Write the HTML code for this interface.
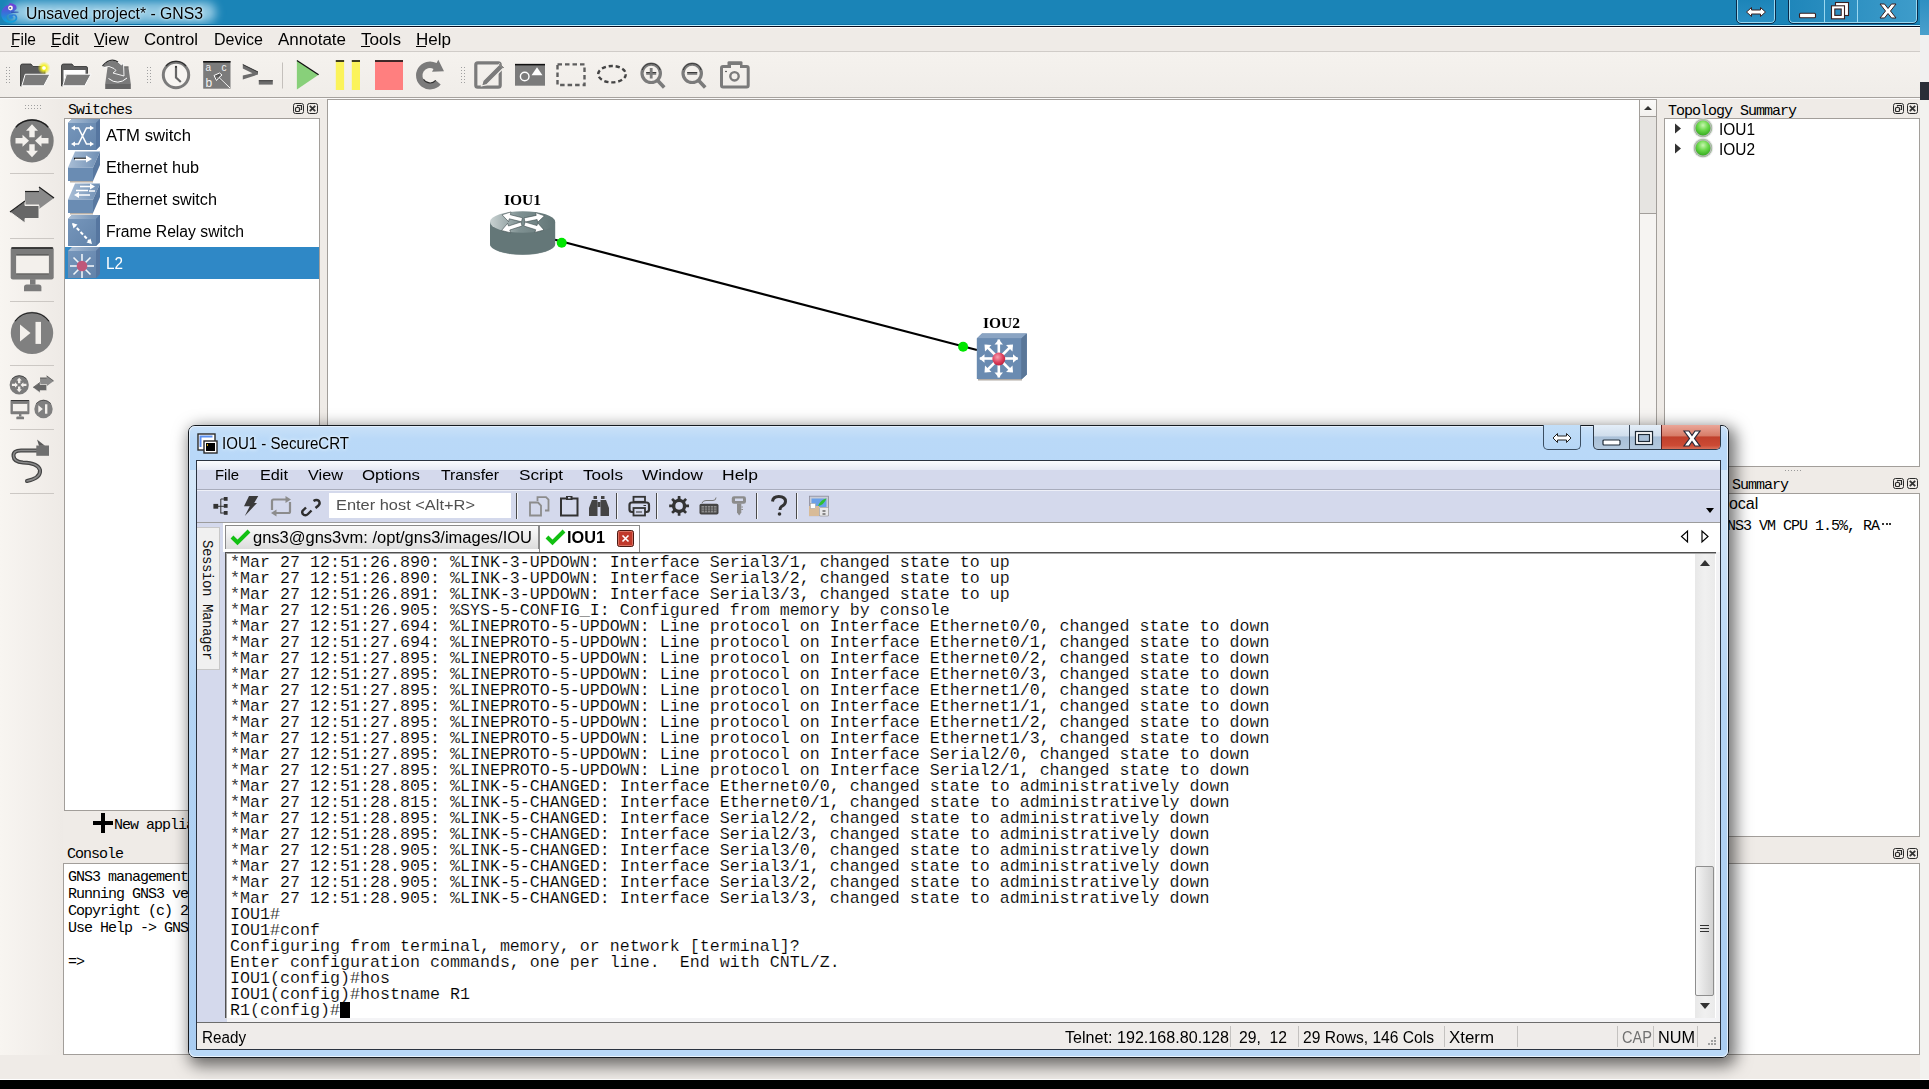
<!DOCTYPE html>
<html><head><meta charset="utf-8">
<style>
*{margin:0;padding:0;box-sizing:border-box}
html,body{width:1929px;height:1089px;overflow:hidden;background:#efebe7;font-family:"Liberation Sans",sans-serif;position:relative}
.a{position:absolute}
.t{position:absolute;white-space:pre;line-height:1}
svg{position:absolute;overflow:visible}
</style></head><body>
<div class="a" style="left:1920px;top:0px;width:9px;height:35px;background:linear-gradient(#2f8fc2,#4aa0cc);"></div><div class="a" style="left:1920px;top:35px;width:9px;height:47px;background:#f0f0f0;"></div><div class="a" style="left:1920px;top:82px;width:9px;height:18px;background:#2a2e38;"></div><div class="a" style="left:1920px;top:100px;width:9px;height:980px;background:#f2f2ef;"></div><div class="a" style="left:0px;top:0px;width:1920px;height:26px;background:#1a84b7;"></div><div class="a" style="left:10px;top:2px;width:206px;height:21px;border-radius:10px;background:rgba(225,245,255,.62);filter:blur(5px)"></div><div class="a" style="left:0px;top:24px;width:1920px;height:1px;background:#0c72a8;"></div><div class="a" style="left:0px;top:25px;width:1920px;height:1px;background:#c4f0ff;"></div><div class="a" style="left:0px;top:26px;width:1920px;height:1px;background:#070a1c;"></div><div class="a" style="left:0px;top:27px;width:1920px;height:1px;background:#ffffff;"></div><div class="a" style="left:1736px;top:-2px;width:40px;height:26px;border:1px solid #0a2a48;border-radius:0 0 5px 5px;box-shadow:inset 0 0 0 1px #9ad8f0;background:linear-gradient(#1c84b8,#2a90c4)"></div><div class="a" style="left:1788px;top:-2px;width:130px;height:26px;border:1px solid #0a2a48;border-radius:0 0 5px 5px;box-shadow:inset 0 0 0 1px #9ad8f0;background:linear-gradient(90deg,#1f86ba,#3e9cca)"></div><div class="a" style="left:1824px;top:0px;width:1px;height:23px;background:#9ad8f0;"></div><div class="a" style="left:1857px;top:0px;width:1px;height:23px;background:#9ad8f0;"></div><svg style="left:1745px;top:6px" width="22" height="12" viewBox="0 0 22 12"><path d="M1.5 6 L6.5 1.5 V4 H15.5 V1.5 L20.5 6 L15.5 10.5 V8 H6.5 V10.5 Z" fill="#fff" stroke="#3a2020" stroke-width="1"/></svg><svg style="left:1798px;top:12px" width="19" height="8"><rect x="1.5" y="1.2" width="16" height="4.6" rx="1" fill="#fff" stroke="#3a2020" stroke-width="1.1"/></svg><svg style="left:1830px;top:1px" width="21" height="19"><rect x="5.5" y="1.5" width="13" height="13" fill="#fff" stroke="#3a2020" stroke-width="1.1"/><rect x="1.5" y="4.8" width="13" height="13" fill="#fff" stroke="#3a2020" stroke-width="1.1"/><rect x="4.8" y="8" width="6.4" height="6.4" fill="#2a8cc0" stroke="#3a2020" stroke-width="1.1"/></svg><svg style="left:1879px;top:3px" width="18" height="16" viewBox="0 0 18 16"><path d="M1 1 H5.5 L9 5.5 L12.5 1 H17 L11.5 8 L17 15 H12.5 L9 10.5 L5.5 15 H1 L6.5 8 Z" fill="#fff" stroke="#3a2020" stroke-width="1"/></svg><div class="t" style="left:26px;top:6.00px;font-family:'Liberation Sans';font-size:16px;color:#000;transform:scaleX(0.9853);transform-origin:0 0;text-shadow:0 0 5px #d8f2ff,0 0 2px #e0f6ff;">Unsaved project* - GNS3</div><div class="a" style="left:0px;top:28px;width:1920px;height:23px;background:#efebe7;"></div><div class="a" style="left:0px;top:51px;width:1920px;height:1px;background:#d0ccc8;"></div><div class="t" style="left:11px;top:32.00px;font-family:'Liberation Sans';font-size:16px;color:#000;transform:scaleX(0.9697);transform-origin:0 0;">File</div><div class="t" style="left:51px;top:32.00px;font-family:'Liberation Sans';font-size:16px;color:#000;transform:scaleX(1.0153);transform-origin:0 0;">Edit</div><div class="t" style="left:94px;top:32.00px;font-family:'Liberation Sans';font-size:16px;color:#000;transform:scaleX(1.0177);transform-origin:0 0;">View</div><div class="t" style="left:144px;top:32.00px;font-family:'Liberation Sans';font-size:16px;color:#000;transform:scaleX(1.0470);transform-origin:0 0;">Control</div><div class="t" style="left:214px;top:32.00px;font-family:'Liberation Sans';font-size:16px;color:#000;transform:scaleX(1.0019);transform-origin:0 0;">Device</div><div class="t" style="left:278px;top:32.00px;font-family:'Liberation Sans';font-size:16px;color:#000;transform:scaleX(1.0615);transform-origin:0 0;">Annotate</div><div class="t" style="left:361px;top:32.00px;font-family:'Liberation Sans';font-size:16px;color:#000;transform:scaleX(1.0707);transform-origin:0 0;">Tools</div><div class="t" style="left:416px;top:32.00px;font-family:'Liberation Sans';font-size:16px;color:#000;transform:scaleX(1.0636);transform-origin:0 0;">Help</div><div class="a" style="left:11px;top:46px;width:8px;height:1px;background:#000;"></div><div class="a" style="left:51px;top:46px;width:8px;height:1px;background:#000;"></div><div class="a" style="left:94px;top:46px;width:10px;height:1px;background:#000;"></div><div class="a" style="left:361px;top:46px;width:9px;height:1px;background:#000;"></div><div class="a" style="left:416px;top:46px;width:10px;height:1px;background:#000;"></div><div class="a" style="left:0px;top:52px;width:1920px;height:45px;background:linear-gradient(#f5f2ee,#f0ede9);"></div><div class="a" style="left:0px;top:97px;width:1920px;height:1px;background:#a6a29e;"></div><div class="a" style="left:0px;top:98px;width:1920px;height:1px;background:#fbfaf9;"></div><div class="a" style="left:0px;top:99px;width:63px;height:956px;background:linear-gradient(90deg,#f8f5f1,#eeeae6);"></div><div class="a" style="left:0px;top:1055px;width:1920px;height:24px;background:#efebe7;"></div><div class="a" style="left:0px;top:1079px;width:1929px;height:1px;background:#ffffff;"></div><div class="a" style="left:0px;top:1080px;width:1929px;height:9px;background:#000;"></div><div class="a" style="left:63px;top:99px;width:264px;height:738px;background:#efebe7;"></div><div class="t" style="left:68px;top:103.00px;font-family:'Liberation Mono';font-size:15px;color:#000;letter-spacing:-1px;">Switches</div><svg style="left:293px;top:103px" width="26" height="12" viewBox="0 0 26 12"><rect x="0.5" y="0.5" width="10" height="10" rx="2" fill="none" stroke="#2a2a2a" stroke-width="1"/><rect x="2.5" y="4.5" width="4" height="4" rx="1" fill="none" stroke="#2a2a2a" stroke-width="1.2"/><path d="M4.5 3.5 V2.5 H8.5 V6.5 H7.5" fill="none" stroke="#2a2a2a" stroke-width="1.2"/><rect x="14.5" y="0.5" width="10" height="10" rx="2" fill="none" stroke="#2a2a2a" stroke-width="1"/><path d="M16.8 2.8 L22.2 8.2 M22.2 2.8 L16.8 8.2" stroke="#333" stroke-width="1.8"/></svg><div class="a" style="left:64px;top:118px;width:256px;height:693px;background:#a29e9a;"></div><div class="a" style="left:65px;top:119px;width:254px;height:691px;background:#ffffff;"></div><div class="a" style="left:65px;top:247px;width:254px;height:32px;background:#2f88c6;"></div><div class="t" style="left:106px;top:128.00px;font-family:'Liberation Sans';font-size:16px;color:#000;transform:scaleX(1.0431);transform-origin:0 0;">ATM switch</div><div class="t" style="left:106px;top:160.00px;font-family:'Liberation Sans';font-size:16px;color:#000;transform:scaleX(1.0150);transform-origin:0 0;">Ethernet hub</div><div class="t" style="left:106px;top:192.00px;font-family:'Liberation Sans';font-size:16px;color:#000;transform:scaleX(1.0147);transform-origin:0 0;">Ethernet switch</div><div class="t" style="left:106px;top:224.00px;font-family:'Liberation Sans';font-size:16px;color:#000;transform:scaleX(0.9823);transform-origin:0 0;">Frame Relay switch</div><div class="t" style="left:106px;top:256.00px;font-family:'Liberation Sans';font-size:16px;color:#fff;transform:scaleX(0.9552);transform-origin:0 0;">L2</div><svg style="left:93px;top:813px" width="20" height="20" viewBox="0 0 20 20"><path d="M8 0h4v8h8v4h-8v8h-4v-8h-8v-4h8z" fill="#000"/></svg><div class="t" style="left:114px;top:818.00px;font-family:'Liberation Mono';font-size:15px;color:#000;letter-spacing:-1px;">New appliance template</div><div class="a" style="left:327px;top:99px;width:1330px;height:738px;background:#a29e9a;"></div><div class="a" style="left:328px;top:100px;width:1311px;height:736px;background:#ffffff;"></div><div class="a" style="left:1639px;top:100px;width:17px;height:736px;background:#f6f4f2;"></div><div class="a" style="left:1639px;top:100px;width:1px;height:736px;background:#a29e9a;"></div><div class="a" style="left:1640px;top:100px;width:16px;height:16px;background:linear-gradient(#fbfaf9,#f3f1ee);"></div><div class="a" style="left:1640px;top:116px;width:16px;height:1px;background:#a29e9a;"></div><div class="a" style="left:1640px;top:117px;width:16px;height:96px;background:#e6e4e1;"></div><div class="a" style="left:1640px;top:213px;width:16px;height:1px;background:#a29e9a;"></div><svg style="left:1643px;top:104px" width="10" height="8"><path d="M1 6 L5 2 L9 6z" fill="#333"/></svg><div class="a" style="left:1657px;top:99px;width:263px;height:738px;background:#efebe7;"></div><div class="t" style="left:1668px;top:104.00px;font-family:'Liberation Mono';font-size:15px;color:#000;letter-spacing:-1px;">Topology Summary</div><svg style="left:1893px;top:103px" width="26" height="12" viewBox="0 0 26 12"><rect x="0.5" y="0.5" width="10" height="10" rx="2" fill="none" stroke="#2a2a2a" stroke-width="1"/><rect x="2.5" y="4.5" width="4" height="4" rx="1" fill="none" stroke="#2a2a2a" stroke-width="1.2"/><path d="M4.5 3.5 V2.5 H8.5 V6.5 H7.5" fill="none" stroke="#2a2a2a" stroke-width="1.2"/><rect x="14.5" y="0.5" width="10" height="10" rx="2" fill="none" stroke="#2a2a2a" stroke-width="1"/><path d="M16.8 2.8 L22.2 8.2 M22.2 2.8 L16.8 8.2" stroke="#333" stroke-width="1.8"/></svg><div class="a" style="left:1664px;top:118px;width:256px;height:349px;background:#a29e9a;"></div><div class="a" style="left:1665px;top:119px;width:254px;height:347px;background:#ffffff;"></div><svg style="left:1674px;top:123px" width="8" height="11"><path d="M1 0.5 L7 5.5 L1 10.5z" fill="#333"/></svg><div class="a" style="left:1694px;top:119px;width:18px;height:18px;border-radius:50%;background:radial-gradient(circle at 50% 35%,#c8f5b0 0,#6ad84a 35%,#2ca418 75%);box-shadow:0 0 0 1.5px #b8b8b8 inset, 0 0 1px 1px #d8d8d8"></div><div class="t" style="left:1719px;top:122.00px;font-family:'Liberation Sans';font-size:16px;color:#000;transform:scaleX(0.9640);transform-origin:0 0;">IOU1</div><svg style="left:1674px;top:143px" width="8" height="11"><path d="M1 0.5 L7 5.5 L1 10.5z" fill="#333"/></svg><div class="a" style="left:1694px;top:139px;width:18px;height:18px;border-radius:50%;background:radial-gradient(circle at 50% 35%,#c8f5b0 0,#6ad84a 35%,#2ca418 75%);box-shadow:0 0 0 1.5px #b8b8b8 inset, 0 0 1px 1px #d8d8d8"></div><div class="t" style="left:1719px;top:142.00px;font-family:'Liberation Sans';font-size:16px;color:#000;transform:scaleX(0.9640);transform-origin:0 0;">IOU2</div><div class="a" style="left:1785px;top:470px;width:1px;height:1px;background:#9a9a9a;"></div><div class="a" style="left:1788px;top:470px;width:1px;height:1px;background:#9a9a9a;"></div><div class="a" style="left:1791px;top:470px;width:1px;height:1px;background:#9a9a9a;"></div><div class="a" style="left:1794px;top:470px;width:1px;height:1px;background:#9a9a9a;"></div><div class="a" style="left:1797px;top:470px;width:1px;height:1px;background:#9a9a9a;"></div><div class="a" style="left:1800px;top:470px;width:1px;height:1px;background:#9a9a9a;"></div><div class="t" style="left:1668px;top:478.00px;font-family:'Liberation Mono';font-size:15px;color:#000;letter-spacing:-1px;">Compute Summary</div><svg style="left:1893px;top:478px" width="26" height="12" viewBox="0 0 26 12"><rect x="0.5" y="0.5" width="10" height="10" rx="2" fill="none" stroke="#2a2a2a" stroke-width="1"/><rect x="2.5" y="4.5" width="4" height="4" rx="1" fill="none" stroke="#2a2a2a" stroke-width="1.2"/><path d="M4.5 3.5 V2.5 H8.5 V6.5 H7.5" fill="none" stroke="#2a2a2a" stroke-width="1.2"/><rect x="14.5" y="0.5" width="10" height="10" rx="2" fill="none" stroke="#2a2a2a" stroke-width="1"/><path d="M16.8 2.8 L22.2 8.2 M22.2 2.8 L16.8 8.2" stroke="#333" stroke-width="1.8"/></svg><div class="a" style="left:1664px;top:493px;width:256px;height:344px;background:#a29e9a;"></div><div class="a" style="left:1665px;top:494px;width:254px;height:342px;background:#ffffff;"></div><div class="t" style="left:1720px;top:496.00px;font-family:'Liberation Sans';font-size:16px;color:#000;">Local</div><div class="t" style="left:1719px;top:519.00px;font-family:'Liberation Mono';font-size:15px;color:#000;letter-spacing:-1px;">GNS3 VM CPU 1.5%, RA</div><div class="a" style="left:1882px;top:523px;width:2px;height:2px;background:#333;"></div><div class="a" style="left:1885.5px;top:523px;width:2px;height:2px;background:#333;"></div><div class="a" style="left:1889px;top:523px;width:2px;height:2px;background:#333;"></div><div class="a" style="left:63px;top:837px;width:1857px;height:26px;background:#efebe7;"></div><div class="t" style="left:67px;top:847.00px;font-family:'Liberation Mono';font-size:15px;color:#000;letter-spacing:-1px;">Console</div><svg style="left:1893px;top:848px" width="26" height="12" viewBox="0 0 26 12"><rect x="0.5" y="0.5" width="10" height="10" rx="2" fill="none" stroke="#2a2a2a" stroke-width="1"/><rect x="2.5" y="4.5" width="4" height="4" rx="1" fill="none" stroke="#2a2a2a" stroke-width="1.2"/><path d="M4.5 3.5 V2.5 H8.5 V6.5 H7.5" fill="none" stroke="#2a2a2a" stroke-width="1.2"/><rect x="14.5" y="0.5" width="10" height="10" rx="2" fill="none" stroke="#2a2a2a" stroke-width="1"/><path d="M16.8 2.8 L22.2 8.2 M22.2 2.8 L16.8 8.2" stroke="#333" stroke-width="1.8"/></svg><div class="a" style="left:63px;top:863px;width:1857px;height:192px;background:#a29e9a;"></div><div class="a" style="left:64px;top:864px;width:1855px;height:190px;background:#ffffff;"></div><div class="t" style="left:68px;top:870.00px;font-family:'Liberation Mono';font-size:15px;color:#000;letter-spacing:-1px;">GNS3 management console.</div><div class="t" style="left:68px;top:887.00px;font-family:'Liberation Mono';font-size:15px;color:#000;letter-spacing:-1px;">Running GNS3 version 1.5.2 on Windows</div><div class="t" style="left:68px;top:904.00px;font-family:'Liberation Mono';font-size:15px;color:#000;letter-spacing:-1px;">Copyright (c) 2006-2016 GNS3 Technologies.</div><div class="t" style="left:68px;top:921.00px;font-family:'Liberation Mono';font-size:15px;color:#000;letter-spacing:-1px;">Use Help -&gt; GNS3 Doctor to detect common issues.</div><div class="t" style="left:68px;top:938.00px;font-family:'Liberation Mono';font-size:15px;color:#000;letter-spacing:-1px;"></div><div class="t" style="left:68px;top:955.00px;font-family:'Liberation Mono';font-size:15px;color:#000;letter-spacing:-1px;">=&gt;</div><svg style="left:0;top:0" width="1929" height="1089" viewBox="0 0 1929 1089"><defs><linearGradient id="boxF" x1="0" y1="0" x2="1" y2="1"><stop offset="0" stop-color="#7696bb"/><stop offset="1" stop-color="#6283aa"/></linearGradient><linearGradient id="boxT" x1="0" y1="0" x2="1" y2="0"><stop offset="0" stop-color="#a9bed6"/><stop offset="1" stop-color="#6f8fb4"/></linearGradient><linearGradient id="rtTop" x1="0" y1="0" x2="1" y2="0"><stop offset="0" stop-color="#c9d2d2"/><stop offset=".45" stop-color="#7f9192"/><stop offset="1" stop-color="#627576"/></linearGradient><radialGradient id="red" cx=".4" cy=".35" r=".7"><stop offset="0" stop-color="#f6a0b0"/><stop offset=".6" stop-color="#de3f5c"/><stop offset="1" stop-color="#b8203c"/></radialGradient><radialGradient id="yel" cx=".5" cy=".5" r=".5"><stop offset="0" stop-color="#ffffe0"/><stop offset=".35" stop-color="#f4f020"/><stop offset="1" stop-color="#f4f020" stop-opacity="0"/></radialGradient></defs><rect x="6" y="67" width="1" height="1" fill="#a0a0a0"/><rect x="9" y="67" width="1" height="1" fill="#a0a0a0"/><rect x="6" y="70" width="1" height="1" fill="#a0a0a0"/><rect x="9" y="70" width="1" height="1" fill="#a0a0a0"/><rect x="6" y="73" width="1" height="1" fill="#a0a0a0"/><rect x="9" y="73" width="1" height="1" fill="#a0a0a0"/><rect x="6" y="76" width="1" height="1" fill="#a0a0a0"/><rect x="9" y="76" width="1" height="1" fill="#a0a0a0"/><rect x="6" y="79" width="1" height="1" fill="#a0a0a0"/><rect x="9" y="79" width="1" height="1" fill="#a0a0a0"/><rect x="6" y="82" width="1" height="1" fill="#a0a0a0"/><rect x="9" y="82" width="1" height="1" fill="#a0a0a0"/><rect x="147" y="67" width="1" height="1" fill="#a0a0a0"/><rect x="150" y="67" width="1" height="1" fill="#a0a0a0"/><rect x="147" y="70" width="1" height="1" fill="#a0a0a0"/><rect x="150" y="70" width="1" height="1" fill="#a0a0a0"/><rect x="147" y="73" width="1" height="1" fill="#a0a0a0"/><rect x="150" y="73" width="1" height="1" fill="#a0a0a0"/><rect x="147" y="76" width="1" height="1" fill="#a0a0a0"/><rect x="150" y="76" width="1" height="1" fill="#a0a0a0"/><rect x="147" y="79" width="1" height="1" fill="#a0a0a0"/><rect x="150" y="79" width="1" height="1" fill="#a0a0a0"/><rect x="147" y="82" width="1" height="1" fill="#a0a0a0"/><rect x="150" y="82" width="1" height="1" fill="#a0a0a0"/><rect x="461" y="67" width="1" height="1" fill="#a0a0a0"/><rect x="464" y="67" width="1" height="1" fill="#a0a0a0"/><rect x="461" y="70" width="1" height="1" fill="#a0a0a0"/><rect x="464" y="70" width="1" height="1" fill="#a0a0a0"/><rect x="461" y="73" width="1" height="1" fill="#a0a0a0"/><rect x="464" y="73" width="1" height="1" fill="#a0a0a0"/><rect x="461" y="76" width="1" height="1" fill="#a0a0a0"/><rect x="464" y="76" width="1" height="1" fill="#a0a0a0"/><rect x="461" y="79" width="1" height="1" fill="#a0a0a0"/><rect x="464" y="79" width="1" height="1" fill="#a0a0a0"/><rect x="461" y="82" width="1" height="1" fill="#a0a0a0"/><rect x="464" y="82" width="1" height="1" fill="#a0a0a0"/><rect x="25" y="105" width="1" height="1" fill="#a0a0a0"/><rect x="25" y="108" width="1" height="1" fill="#a0a0a0"/><rect x="28" y="105" width="1" height="1" fill="#a0a0a0"/><rect x="28" y="108" width="1" height="1" fill="#a0a0a0"/><rect x="31" y="105" width="1" height="1" fill="#a0a0a0"/><rect x="31" y="108" width="1" height="1" fill="#a0a0a0"/><rect x="34" y="105" width="1" height="1" fill="#a0a0a0"/><rect x="34" y="108" width="1" height="1" fill="#a0a0a0"/><rect x="37" y="105" width="1" height="1" fill="#a0a0a0"/><rect x="37" y="108" width="1" height="1" fill="#a0a0a0"/><rect x="40" y="105" width="1" height="1" fill="#a0a0a0"/><rect x="40" y="108" width="1" height="1" fill="#a0a0a0"/><path d="M20.5 86 V66 Q20.5 64 22.5 64 H31 L33 66.5 H45 V74 H25 L21.5 86Z" fill="#5c5c5c" stroke="#2e2e2e" stroke-width=".8"/><path d="M21.8 85.8 L25.2 74.2 H50 L43.9 85.8Z" fill="#7b7b7b" stroke="#fff" stroke-width="1"/><circle cx="44" cy="68" r="6.5" fill="url(#yel)"/><circle cx="44" cy="68" r="1.8" fill="#fff"/><path d="M61.5 86 V66 Q61.5 64 63.5 64 H72 L74 66.5 H86 Q87.5 66.5 87.5 68 V74 H66 L62.5 86Z" fill="#5c5c5c" stroke="#2e2e2e" stroke-width=".8"/><path d="M63.5 84 V70 H85.5 V74 H66Z" fill="#fff"/><path d="M62.8 85.8 L66.4 74.2 H91 L84.8 85.8Z" fill="#7b7b7b" stroke="#fff" stroke-width="1"/><path d="M107.5 67.5 H128.5 L130.8 84 H105.2Z" fill="#7b7b7b"/><rect x="105.2" y="84" width="25.6" height="5" fill="#666"/><path d="M107.5 67 H128.5" stroke="#2e2e2e" stroke-width="1"/><path d="M108.5 78.5 Q118 86 127 78" fill="none" stroke="#fff" stroke-width="1"/><path d="M102.5 66 Q110 57 118 62 L121.5 65 L123.5 63 L124 76 L113 73 L116 70.5 L114 68.5 Q109 65 104 67.5Z" fill="#7b7b7b" stroke="#fff" stroke-width=".9"/><path d="M102.5 66 Q110 57 118 62" fill="none" stroke="#2e2e2e" stroke-width="1.2"/><circle cx="176" cy="75" r="12.7" fill="#f7f5f2" stroke="#7b7b7b" stroke-width="3"/><path d="M166 66 A13 13 0 0 1 186 66" fill="none" stroke="#2e2e2e" stroke-width="1.2"/><path d="M176 66.5 V77.5 L180.8 82" fill="none" stroke="#666" stroke-width="2.2"/><circle cx="176" cy="66.8" r="1" fill="#2e2e2e"/><rect x="203.2" y="61" width="27.3" height="27.7" fill="#7b7b7b"/><rect x="203.2" y="61" width="27.3" height="1.6" fill="#111"/><text x="205.5" y="71" font-family="Liberation Sans" font-size="10" fill="#f4f4f4">a</text><text x="221.5" y="71" font-family="Liberation Sans" font-size="10" fill="#f4f4f4">c</text><text x="205.5" y="86.5" font-family="Liberation Sans" font-size="12" fill="#f4f4f4">b</text><path d="M214 75.5 L219.5 73 L222 75 L219 77.5 L230 88 M214 75.5 L216.5 80.5 L219 77.5" fill="#555" stroke="#fff" stroke-width="1"/><path d="M242.8 64.5 L258 72 V74.5 L242.8 79.6 V75.5 L252.5 73.2 L242.8 68.5Z" fill="#6c6c6c"/><path d="M242.8 64.5 L258 72" stroke="#2e2e2e" stroke-width="1"/><rect x="258.8" y="80.3" width="14" height="4.3" fill="#6c6c6c"/><rect x="258.8" y="80.3" width="14" height=".9" fill="#333"/><rect x="282" y="62.5" width="1" height="26" fill="#c4c0bc"/><path d="M296.9 60.5 L318.6 74.8 L296.9 89.6Z" fill="#88d07a"/><path d="M296.9 60.5 L318.6 74.8" stroke="#111" stroke-width="1.3"/><rect x="335.8" y="60.2" width="8.3" height="29.8" fill="#fbf35a"/><rect x="335.8" y="60.2" width="8.3" height="1.6" fill="#111"/><rect x="351.8" y="60.2" width="8.2" height="29.8" fill="#fbf35a"/><rect x="351.8" y="60.2" width="8.2" height="1.6" fill="#111"/><rect x="375" y="60.2" width="28" height="29.8" fill="#ff7f7f"/><rect x="375" y="60.2" width="28" height="1.6" fill="#111"/><path d="M436.6 63.1 A14 14 0 1 0 440.7 84.5 L435.7 80.3 A7.5 7.5 0 1 1 433.5 68.9 L432 71.8 L444 71.3 L438.3 59.8Z" fill="#7b7b7b"/><path d="M435.7 80.3 A7.5 7.5 0 0 1 423.5 79.2" fill="none" stroke="#2e2e2e" stroke-width="1.1"/><rect x="475.8" y="62.8" width="24.4" height="24.4" rx="2" fill="none" stroke="#7b7b7b" stroke-width="3.2"/><path d="M473.5 62 H490" stroke="#2e2e2e" stroke-width="0"/><path d="M483 80.5 L499.5 64 L503.5 68 L487 84.5 L481.5 86Z" fill="#7b7b7b" stroke="#f4f1ed" stroke-width="1.2"/><path d="M499.5 64 L503.5 68" stroke="#2e2e2e" stroke-width="1"/><rect x="515" y="63.9" width="30" height="21.8" fill="#7b7b7b"/><rect x="515" y="63.9" width="30" height="1.5" fill="#111"/><circle cx="524.7" cy="76.5" r="4.3" fill="none" stroke="#fff" stroke-width="1.4"/><path d="M537 67.3 L542.5 75.3 H531.5Z" fill="#fff"/><rect x="557.5" y="64.4" width="27" height="20.6" fill="none" stroke="#5e5e5e" stroke-width="2.4" stroke-dasharray="4.5 3"/><ellipse cx="612" cy="74.2" rx="13.8" ry="8.2" fill="none" stroke="#444" stroke-width="2.4" stroke-dasharray="4.2 2.8"/><circle cx="651.2" cy="73.3" r="9.2" fill="none" stroke="#7b7b7b" stroke-width="3.2"/><path d="M642.2 70 A9.5 9.5 0 0 1 660.2 70" fill="none" stroke="#2e2e2e" stroke-width="0.9"/><path d="M657.7 80.5 L664.2 87.5" stroke="#7b7b7b" stroke-width="3.6"/><rect x="646.2" y="72" width="10" height="2.8" fill="#7b7b7b"/><rect x="646.2" y="72" width="10" height=".8" fill="#2e2e2e"/><rect x="649.8000000000001" y="68" width="2.8" height="10.5" fill="#7b7b7b"/><circle cx="692.2" cy="73.3" r="9.2" fill="none" stroke="#7b7b7b" stroke-width="3.2"/><path d="M683.2 70 A9.5 9.5 0 0 1 701.2 70" fill="none" stroke="#2e2e2e" stroke-width="0.9"/><path d="M698.7 80.5 L705.2 87.5" stroke="#7b7b7b" stroke-width="3.6"/><rect x="687.2" y="72" width="10" height="2.8" fill="#7b7b7b"/><rect x="687.2" y="72" width="10" height=".8" fill="#2e2e2e"/><path d="M727.5 65.5 V62.5 Q727.5 61.3 729 61.3 H741 Q742.5 61.3 742.5 62.5 V65.5" fill="#7b7b7b"/><rect x="721.5" y="66.5" width="26.7" height="20.5" rx="1.5" fill="none" stroke="#7b7b7b" stroke-width="3"/><rect x="731" y="65" width="9" height="3" fill="#f4f1ed"/><circle cx="734.5" cy="76.3" r="4.2" fill="none" stroke="#7b7b7b" stroke-width="2.4"/><circle cx="726" cy="71.5" r=".8" fill="#2e2e2e"/><circle cx="32" cy="140.8" r="21.7" fill="#7b7b7b"/><path d="M15.725000000000001 127.34600000000002 A21.7 21.7 0 0 1 48.275 127.34600000000002" fill="none" stroke="#1e1e1e" stroke-width="1.3"/><g transform="translate(32 140.8) scale(1.0)" fill="#f3f0ec"><path d="M0 -16.5 L-6 -10 H-2.7 V-3.5 H2.7 V-10 H6Z"/><path d="M0 16.5 L-6 10 H-2.7 V3.5 H2.7 V10 H6Z"/><path d="M-3 0 L-9.5 -6 V-2.7 H-16.5 V2.7 H-9.5 V6Z"/><path d="M3 0 L9.5 -6 V-2.7 H16.5 V2.7 H9.5 V6Z"/></g><rect x="10" y="173" width="44" height="1" fill="#ccc8c4"/><rect x="10" y="238" width="44" height="1" fill="#ccc8c4"/><rect x="10" y="301" width="44" height="1" fill="#ccc8c4"/><rect x="10" y="365" width="44" height="1" fill="#ccc8c4"/><rect x="10" y="429" width="44" height="1" fill="#ccc8c4"/><rect x="10" y="493" width="44" height="1" fill="#ccc8c4"/><g transform="translate(10 188.5) scale(1.0)"><path d="M15 3 H29 V-1.5 L44 9.5 L29 20.5 V16 H15Z" fill="#8a8a8a"/><path d="M29 -1.5 L44 9.5" stroke="#1e1e1e" stroke-width="1.2"/><path d="M15 3 H29" stroke="#1e1e1e" stroke-width="1.2"/><path d="M29 17 H15 V12.5 L0 23.5 L15 34.5 V30 H29Z" fill="#676767" stroke="#f3f0ec" stroke-width="1"/><path d="M0 23.5 L15 12.5" stroke="#1e1e1e" stroke-width="1.2"/></g><g transform="translate(10.7 247.2) scale(1.0)"><rect x="0" y="0" width="43" height="32.2" rx="2.2" fill="#7b7b7b"/><rect x="0.5" y="0" width="42" height="1.5" rx="1" fill="#222"/><rect x="5.4" y="7.1" width="32.8" height="20.2" fill="#f3f0ec"/><rect x="5.4" y="7.1" width="32.8" height="1.2" fill="#333"/><rect x="5.4" y="26.3" width="32.8" height="1" fill="#222"/><rect x="19.3" y="32" width="5.5" height="5.5" fill="#7b7b7b"/><path d="M13.3 44 V40 Q13.3 37.3 16 37.3 H28 Q30.7 37.3 30.7 40 V44Z" fill="#7b7b7b"/></g><circle cx="32" cy="332.9" r="21.2" fill="#808080"/><path d="M15.04 321.23999999999995 A21.2 21.2 0 0 1 48.96 321.23999999999995" fill="none" stroke="#1e1e1e" stroke-width="1.2"/><g transform="translate(32 332.9) scale(1.0)" fill="#f3f0ec"><path d="M-12 -8.5 L-1.5 0 L-12 8.5Z"/><rect x="3.5" y="-11" width="5.5" height="22"/></g><circle cx="19.2" cy="384.9" r="9.6" fill="#7b7b7b"/><path d="M12.0 378.948 A9.6 9.6 0 0 1 26.4 378.948" fill="none" stroke="#1e1e1e" stroke-width="0.5720000000000001"/><g transform="translate(19.2 384.9) scale(0.44)" fill="#f3f0ec"><path d="M0 -16.5 L-6 -10 H-2.7 V-3.5 H2.7 V-10 H6Z"/><path d="M0 16.5 L-6 10 H-2.7 V3.5 H2.7 V10 H6Z"/><path d="M-3 0 L-9.5 -6 V-2.7 H-16.5 V2.7 H-9.5 V6Z"/><path d="M3 0 L9.5 -6 V-2.7 H16.5 V2.7 H9.5 V6Z"/></g><g transform="translate(33 376.5) scale(0.47)"><path d="M15 3 H29 V-1.5 L44 9.5 L29 20.5 V16 H15Z" fill="#8a8a8a"/><path d="M29 -1.5 L44 9.5" stroke="#1e1e1e" stroke-width="1.2"/><path d="M15 3 H29" stroke="#1e1e1e" stroke-width="1.2"/><path d="M29 17 H15 V12.5 L0 23.5 L15 34.5 V30 H29Z" fill="#676767" stroke="#f3f0ec" stroke-width="1"/><path d="M0 23.5 L15 12.5" stroke="#1e1e1e" stroke-width="1.2"/></g><g transform="translate(10.5 400) scale(0.44)"><rect x="0" y="0" width="43" height="32.2" rx="2.2" fill="#7b7b7b"/><rect x="0.5" y="0" width="42" height="1.5" rx="1" fill="#222"/><rect x="5.4" y="7.1" width="32.8" height="20.2" fill="#f3f0ec"/><rect x="5.4" y="7.1" width="32.8" height="1.2" fill="#333"/><rect x="5.4" y="26.3" width="32.8" height="1" fill="#222"/><rect x="19.3" y="32" width="5.5" height="5.5" fill="#7b7b7b"/><path d="M13.3 44 V40 Q13.3 37.3 16 37.3 H28 Q30.7 37.3 30.7 40 V44Z" fill="#7b7b7b"/></g><circle cx="43.5" cy="409" r="9.2" fill="#808080"/><path d="M36.14 403.94 A9.2 9.2 0 0 1 50.86 403.94" fill="none" stroke="#1e1e1e" stroke-width="0.516"/><g transform="translate(43.5 409) scale(0.43)" fill="#f3f0ec"><path d="M-12 -8.5 L-1.5 0 L-12 8.5Z"/><rect x="3.5" y="-11" width="5.5" height="22"/></g><path d="M37 450.5 H21 Q13 450.5 13.5 456 Q14 462 23 462.5 Q38 463 40 470 Q41 478 27 481" fill="none" stroke="#444" stroke-width="4" stroke-linecap="round"/><path d="M37 450.5 H21 Q13 450.5 13.5 456 Q14 462 23 462.5 Q38 463 40 470 Q41 478 27 481" fill="none" stroke="#8a8a8a" stroke-width="1.6" stroke-linecap="round"/><rect x="36.3" y="445.5" width="12.7" height="10.3" fill="#6f6f6f"/><path d="M37 439.5 L45 445.8 H39Z" fill="#5a5a5a"/><path d="M68 123 L72 119 H100 V146 L96 150 H68Z" fill="#5b7ca3"/><path d="M68 123 L72 119 H100 L96 123Z" fill="url(#boxT)"/><rect x="68" y="123" width="28" height="27" fill="url(#boxF)"/><path d="M96 123 L100 119 V146 L96 150Z" fill="#5676a0"/><g fill="none" stroke="#fff" stroke-width="1.6"><path d="M73 128 H78.5 L86.5 144 H92 M92 128 H86.5 L78.5 144 H73"/></g><g fill="#fff"><path d="M71 128 L75 125.5 V130.5Z M94 128 L90 125.5 V130.5Z M71 144 L75 141.5 V146.5Z M94 144 L90 141.5 V146.5Z"/></g><path d="M68 167.5 L75 151.5 H100 L93 167.5Z" fill="url(#boxT)"/><rect x="68" y="167.5" width="25" height="13.5" fill="#6a8cb3"/><path d="M93 167.5 L100 151.5 V165 L93 181Z" fill="#5878a0"/><rect x="70" y="181" width="23" height="1.5" fill="#b8b0a8"/><path d="M74 158.5 H88" stroke="#111" stroke-width="1.6"/><path d="M75 159.5 H88" stroke="#fff" stroke-width="1.6"/><path d="M92 159 L86 155.5 V162.5Z" fill="#fff"/><path d="M68 199.5 L75 183.5 H100 L93 199.5Z" fill="url(#boxT)"/><rect x="68" y="199.5" width="25" height="13.5" fill="#6a8cb3"/><path d="M93 199.5 L100 183.5 V197 L93 213Z" fill="#5878a0"/><rect x="70" y="213" width="23" height="1.5" fill="#b8b0a8"/><path d="M80 186.5 H92 M78 195 H90" stroke="#fff" stroke-width="1.6"/><path d="M95 186.5 L90 183.5 V189.5Z M74 195 L79 192 V198Z" fill="#fff"/><path d="M76 190.5 H88 M89 191 H95" stroke="#fff" stroke-width="1.4"/><path d="M68 219 L72 215 H100 V242 L96 246 H68Z" fill="#5b7ca3"/><path d="M68 219 L72 215 H100 L96 219Z" fill="url(#boxT)"/><rect x="68" y="219" width="28" height="27" fill="url(#boxF)"/><path d="M96 219 L100 215 V242 L96 246Z" fill="#5676a0"/><path d="M73 224 L91 243" stroke="#fff" stroke-width="2" stroke-dasharray="3.5 2"/><path d="M72 223 L77.5 224.5 L73.5 228.5Z M92 244 L86.5 242.5 L90.5 238.5Z" fill="#fff"/><path d="M68 251 L72 247 H100 V274 L96 278 H68Z" fill="#5b7ca3"/><path d="M68 251 L72 247 H100 L96 251Z" fill="url(#boxT)"/><rect x="68" y="251" width="28" height="27" fill="url(#boxF)"/><path d="M96 251 L100 247 V274 L96 278Z" fill="#5676a0"/><g stroke="#f0f4f8" stroke-width="1.6"><path d="M82 266 L94.0 266.0"/><path d="M82 266 L70.0 266.0"/><path d="M82 266 L82.0 278.0"/><path d="M82 266 L82.0 254.0"/><path d="M82 266 L90.5 274.5"/><path d="M82 266 L73.5 274.5"/><path d="M82 266 L90.5 257.5"/><path d="M82 266 L73.5 257.5"/></g><circle cx="82" cy="266" r="5.3" fill="#c0587a"/><path d="M555 239.8 L977 350" stroke="#000" stroke-width="2.2"/><ellipse cx="522.6" cy="244" rx="32.6" ry="10.7" fill="#596c6d"/><ellipse cx="522.6" cy="244.6" rx="32.3" ry="10.5" fill="#aab4b4" opacity=".5"/><path d="M490 222 V244 A32.6 10.5 0 0 0 555.2 244 V222Z" fill="#647778"/><ellipse cx="522.6" cy="222" rx="32.6" ry="10.8" fill="url(#rtTop)"/><g fill="#fff" stroke="#3a4a4b" stroke-width=".6"><path d="M522.5 217.8 L510.3 214.7 L511.0 211.9 L502.0 214.8 L508.5 221.6 L509.3 218.8 L521.5 221.8Z"/><path d="M524.9 222.1 L537.1 219.5 L537.7 222.3 L544.5 215.8 L535.6 212.6 L536.2 215.4 L524.1 217.9Z"/><path d="M520.9 222.0 L508.5 226.0 L507.6 223.3 L501.5 230.5 L510.7 232.8 L509.8 230.0 L522.1 226.0Z"/><path d="M523.9 226.0 L535.7 229.7 L534.9 232.4 L544.0 230.0 L537.8 222.9 L537.0 225.6 L525.1 222.0Z"/></g><circle cx="561.7" cy="242.8" r="5" fill="#00e600"/><path d="M976.8 338.5 L982 333.5 H1026.8 V374.5 L1021.4 379.5Z" fill="#5a7aa0"/><path d="M976.8 338.5 L982 333.5 H1026.8 L1021.4 338.5Z" fill="#8aa4c3"/><rect x="976.8" y="338.5" width="44.6" height="40.5" fill="#6a8bb1"/><path d="M1021.4 338.5 L1026.8 333.5 V374.5 L1021.4 379.5Z" fill="#5a7798"/><rect x="978" y="379" width="44" height="1.5" fill="#b0aaa4"/><g stroke="#fff" stroke-width="2.6"><path d="M998.8 358.5 L1017.8 358.5"/><path d="M998.8 358.5 L979.8 358.5"/><path d="M998.8 358.5 L998.8 377.5"/><path d="M998.8 358.5 L998.8 339.5"/><path d="M998.8 358.5 L1011.7 371.4"/><path d="M998.8 358.5 L985.9 371.4"/><path d="M998.8 358.5 L1011.7 345.6"/><path d="M998.8 358.5 L985.9 345.6"/></g><g fill="#fff"><path d="M998.8 339.5 L994.5 344.5 H1003Z M998.8 377.5 L994.5 372.5 H1003Z M979.5 358.5 L984.5 354.2 V362.8Z M1018 358.5 L1013 354.2 V362.8Z"/><path d="M984.5 344.5 L991.5 345 L985 351.5Z M1013 344.5 L1006 345 L1012.5 351.5Z M984.5 372.5 L991.5 372 L985 365.5Z M1013 372.5 L1006 372 L1012.5 365.5Z"/></g><circle cx="998.8" cy="359" r="6.4" fill="url(#red)"/><circle cx="963.1" cy="346.7" r="5" fill="#00e600"/><defs><linearGradient id="cham" x1="0" y1="0" x2="0" y2="1"><stop offset="0" stop-color="#7a3ad8"/><stop offset=".45" stop-color="#3e6ad8"/><stop offset="1" stop-color="#0aa8dc"/></linearGradient></defs><path d="M9.5 3.2 Q12.5 2.8 15.5 5 Q17 6.5 16.5 9 L13.5 11.5 L18.2 12 L13 13 Q9 13.5 7 15.5 Q5.5 18 8 20.5 Q11 22 14.5 20 Q16.5 18 15 16 Q13.5 14.8 12.5 16.5 Q12.5 18 14 17.5 Q12 19.5 9.5 18.5 Q7.5 17 9.5 14.8 Q12.5 13.8 15.5 14.5 Q18 16.5 17 19.5 Q15 22.8 9.5 22.8 Q3 22.5 1.3 16 Q0.5 10 5 6.5 Q7 5 9 5Z" fill="url(#cham)"/><circle cx="10.5" cy="8" r="2.4" fill="#fffbe8"/><circle cx="10.2" cy="8" r="1" fill="#5050a0"/><path d="M11 12.2 H18.5" stroke="#2a4aa0" stroke-width=".8"/></svg><div class="t" style="left:504px;top:193.00px;font-family:'Liberation Serif';font-size:15px;color:#000;font-weight:700;transform:scaleX(1.0323);transform-origin:0 0;">IOU1</div><div class="t" style="left:983px;top:316.00px;font-family:'Liberation Serif';font-size:15px;color:#000;font-weight:700;transform:scaleX(1.0323);transform-origin:0 0;">IOU2</div><div class="a" style="left:188px;top:425px;width:1541px;height:633px;border-radius:7px;box-shadow:4px 5px 16px 3px rgba(0,0,0,.55)"></div><div class="a" style="left:188px;top:425px;width:1541px;height:633px;border-radius:7px;border:1px solid #151a20;background:linear-gradient(90deg,#c4dcf4 0,#b7d6f6 30%,#b8d8f8 100%)"></div><div class="a" style="left:189px;top:426px;width:1539px;height:631px;border-radius:6px;border:1px solid rgba(255,255,255,.6);background:linear-gradient(#c8e0f8 0,#bad9f8 12px,#b8d8f8 40px,#b9d8f7 100%)"></div><div class="a" style="left:189px;top:470px;width:7px;height:580px;background:linear-gradient(#d6e8f9,#b4d4f4 40%,#aacdf2 100%);"></div><div class="a" style="left:1721px;top:470px;width:6px;height:580px;background:linear-gradient(#d6e8f9,#b4d4f4 40%,#aacdf2 100%);"></div><svg style="left:197px;top:433px" width="22" height="21" viewBox="0 0 22 21"><rect x="1" y="1" width="17" height="16" fill="#fff" stroke="#2a2a2a" stroke-width="1.4"/><path d="M3.5 14 V3.5 H15.5" fill="none" stroke="#5a8ff0" stroke-width="2"/><rect x="7" y="8" width="13" height="12" fill="#fff" stroke="#2a2a2a" stroke-width="1.4"/><rect x="9" y="10" width="9" height="8" fill="#000"/><rect x="10" y="11" width="1" height="2" fill="#c9a000"/></svg><div class="t" style="left:222px;top:436.00px;font-family:'Liberation Sans';font-size:16px;color:#000;transform:scaleX(0.9417);transform-origin:0 0;text-shadow:0 0 6px #e6f2ff,0 0 3px #eef6ff;">IOU1 - SecureCRT</div><div class="a" style="left:1543px;top:425px;width:38px;height:25px;border:1px solid #3b4e62;border-top:none;border-radius:0 0 5px 5px;background:linear-gradient(#c2def8,#b6d6f6)"></div><svg style="left:1552px;top:432px" width="20" height="12" viewBox="0 0 20 12"><path d="M1 6 L5.5 1.5 V4 H14.5 V1.5 L19 6 L14.5 10.5 V8 H5.5 V10.5 Z" fill="#fff" stroke="#222" stroke-width="1"/></svg><div class="a" style="left:1593px;top:425px;width:128px;height:25px;border:1px solid #2e3a48;border-top:none;border-radius:0 0 5px 5px;overflow:hidden;background:linear-gradient(#e4eef8 0,#d0deec 45%,#a9c0d8 50%,#b4c9de 100%)"><div class="a" style="left:68px;top:0;width:59px;height:24px;background:linear-gradient(#eaa698 0,#d77c68 45%,#c0402c 50%,#cc4a34 85%,#d8705a 100%)"></div><div class="a" style="left:35px;top:0;width:1px;height:24px;background:#3a4858"></div><div class="a" style="left:67px;top:0;width:1px;height:24px;background:#5a2020"></div></div><svg style="left:1602px;top:439px" width="20" height="8"><rect x="1" y="1" width="17" height="5" rx="1" fill="#fff" stroke="#1e2a36" stroke-width="1.2"/></svg><svg style="left:1634px;top:430px" width="22" height="18"><rect x="1.5" y="1.5" width="17" height="13" fill="#fff" stroke="#1e2a36" stroke-width="1.2"/><rect x="4.5" y="4.5" width="11" height="7" fill="#a9c0d8" stroke="#1e2a36" stroke-width="1.2"/></svg><svg style="left:1682px;top:430px" width="20" height="17" viewBox="0 0 20 17"><path d="M2 1 H7 L10 5.5 L13 1 H18 L12.5 8.5 L18 16 H13 L10 11.5 L7 16 H2 L7.5 8.5 Z" fill="#fff" stroke="#2a2a3a" stroke-width="1.2"/></svg><div class="a" style="left:196px;top:460px;width:1525px;height:590px;background:#2b3340;"></div><div class="a" style="left:197px;top:461px;width:1523px;height:588px;background:#d4d9ec;"></div><div class="a" style="left:197px;top:461px;width:1523px;height:9px;background:linear-gradient(#fbfcfe,#e6e9f4);"></div><div class="t" style="left:215px;top:467.00px;font-family:'Liberation Sans';font-size:15px;color:#000;transform:scaleX(0.9929);transform-origin:0 0;">File</div><div class="t" style="left:260px;top:467.00px;font-family:'Liberation Sans';font-size:15px;color:#000;transform:scaleX(1.0828);transform-origin:0 0;">Edit</div><div class="t" style="left:308px;top:467.00px;font-family:'Liberation Sans';font-size:15px;color:#000;transform:scaleX(1.0853);transform-origin:0 0;">View</div><div class="t" style="left:362px;top:467.00px;font-family:'Liberation Sans';font-size:15px;color:#000;transform:scaleX(1.1218);transform-origin:0 0;">Options</div><div class="t" style="left:441px;top:467.00px;font-family:'Liberation Sans';font-size:15px;color:#000;transform:scaleX(1.0489);transform-origin:0 0;">Transfer</div><div class="t" style="left:519px;top:467.00px;font-family:'Liberation Sans';font-size:15px;color:#000;transform:scaleX(1.1475);transform-origin:0 0;">Script</div><div class="t" style="left:583px;top:467.00px;font-family:'Liberation Sans';font-size:15px;color:#000;transform:scaleX(1.1418);transform-origin:0 0;">Tools</div><div class="t" style="left:642px;top:467.00px;font-family:'Liberation Sans';font-size:15px;color:#000;transform:scaleX(1.1432);transform-origin:0 0;">Window</div><div class="t" style="left:722px;top:467.00px;font-family:'Liberation Sans';font-size:15px;color:#000;transform:scaleX(1.1666);transform-origin:0 0;">Help</div><div class="a" style="left:197px;top:489px;width:1523px;height:1px;background:#a8acbc;"></div><div class="a" style="left:197px;top:490px;width:1523px;height:1px;background:#eef0f8;"></div><div class="a" style="left:329px;top:493px;width:182px;height:25px;background:#ffffff;"></div><div class="t" style="left:336px;top:497.00px;font-family:'Liberation Sans';font-size:15px;color:#505050;transform:scaleX(1.0931);transform-origin:0 0;">Enter host &lt;Alt+R&gt;</div><div class="a" style="left:516px;top:493px;width:1px;height:26px;background:#4a4a4a;"></div><div class="a" style="left:517px;top:493px;width:1px;height:26px;background:#f4f6fb;"></div><div class="a" style="left:616px;top:493px;width:1px;height:26px;background:#4a4a4a;"></div><div class="a" style="left:617px;top:493px;width:1px;height:26px;background:#f4f6fb;"></div><div class="a" style="left:656px;top:493px;width:1px;height:26px;background:#4a4a4a;"></div><div class="a" style="left:657px;top:493px;width:1px;height:26px;background:#f4f6fb;"></div><div class="a" style="left:756px;top:493px;width:1px;height:26px;background:#4a4a4a;"></div><div class="a" style="left:757px;top:493px;width:1px;height:26px;background:#f4f6fb;"></div><div class="a" style="left:796px;top:493px;width:1px;height:26px;background:#4a4a4a;"></div><div class="a" style="left:797px;top:493px;width:1px;height:26px;background:#f4f6fb;"></div><svg style="left:0;top:0" width="1929" height="1089" viewBox="0 0 1929 1089"><rect x="213.4" y="503.9" width="4.8" height="4.8" fill="#333"/><path d="M218 506.3 H224 M220.8 499 V513.5 M220.8 499 H224 M220.8 513 H224" stroke="#333" stroke-width="1"/><rect x="223.8" y="497" width="3.8" height="3.8" fill="#333"/><rect x="223.8" y="504" width="3.8" height="3.8" fill="#333"/><rect x="223.8" y="511" width="3.8" height="3.8" fill="#333"/><path d="M249 496 H258.3 L254.2 503 H257 L244.8 516 L249.8 506.2 H244Z" fill="#3a3a3a"/><path d="M272 510 V501 Q272 499.5 273.5 499.5 H287" fill="none" stroke="#8c8c8c" stroke-width="2.2"/><path d="M285.5 496 L291 499.5 L285.5 503Z" fill="#8c8c8c"/><path d="M290 502 V511.5 Q290 513 288.5 513 H275" fill="none" stroke="#8c8c8c" stroke-width="2.2"/><path d="M276.5 509.5 L271 513 L276.5 516.5Z" fill="#8c8c8c"/><path d="M306 507.5 L302.5 511 Q301.5 513.5 304 515 Q306 516 308 514 L311.5 510.5" fill="none" stroke="#2e2e2e" stroke-width="2.4"/><path d="M313.5 501 Q316.5 499 319 501 Q320.5 503.5 318.5 505.5 L315.5 508" fill="none" stroke="#2e2e2e" stroke-width="2.4"/><path d="M537.5 501 V497.2 H546 L548.5 499.7 V510.5 H545" fill="none" stroke="#8c8c8c" stroke-width="1.8"/><path d="M530 515.5 V502.5 H538 L541 505.5 V515.5Z" fill="none" stroke="#8c8c8c" stroke-width="1.8"/><rect x="561" y="498.5" width="16.5" height="17" fill="none" stroke="#333" stroke-width="2"/><rect x="566" y="496" width="6.5" height="4" fill="#333"/><rect x="568" y="497" width="2.5" height="1.5" fill="#d4d9ec"/><path d="M589 516 V508 L592 500 H597.5 V516Z M609 516 V508 L606 500 H600.5 V516Z" fill="#444"/><rect x="593.5" y="496" width="3.5" height="3" fill="#444"/><rect x="601" y="496" width="3.5" height="3" fill="#444"/><rect x="597.5" y="502" width="3" height="5" fill="#444"/><rect x="629.5" y="502.5" width="19.5" height="9.5" rx="2.5" fill="none" stroke="#333" stroke-width="2.2"/><rect x="633.5" y="496.8" width="11.5" height="5" fill="none" stroke="#333" stroke-width="1.8"/><rect x="633.5" y="508" width="11.5" height="7.5" fill="#d4d9ec" stroke="#333" stroke-width="1.8"/><path d="M636 512 H642 M643.5 505.5 H646" stroke="#333" stroke-width="1"/><path d="M686.16 504.47 L689.02 504.60 L689.02 507.20 L686.16 507.33 L685.10 509.88 L687.03 511.99 L685.19 513.83 L683.08 511.90 L680.53 512.96 L680.40 515.82 L677.80 515.82 L677.67 512.96 L675.12 511.90 L673.01 513.83 L671.17 511.99 L673.10 509.88 L672.04 507.33 L669.18 507.20 L669.18 504.60 L672.04 504.47 L673.10 501.92 L671.17 499.81 L673.01 497.97 L675.12 499.90 L677.67 498.84 L677.80 495.98 L680.40 495.98 L680.53 498.84 L683.08 499.90 L685.19 497.97 L687.03 499.81 L685.10 501.92Z" fill="#333"/><circle cx="679.1" cy="505.9" r="3.8" fill="#d4d9ec"/><rect x="699.5" y="503.8" width="19" height="10.8" rx="1.8" fill="#444"/><rect x="701.5" y="506" width="15" height="6.5" fill="#8a8a8a"/><path d="M701.5 508 H716.5 M701.5 510.2 H716.5 M704.5 506 V512.5 M707.5 506 V512.5 M710.5 506 V512.5 M713.5 506 V512.5" stroke="#444" stroke-width=".7"/><path d="M702 503 Q703 500.5 706 500.5 H713 Q716 500.5 716 497.5" fill="none" stroke="#777" stroke-width="1"/><rect x="731.8" y="496.3" width="14.2" height="7.5" rx="2.2" fill="#8c8c8c"/><rect x="735" y="498.5" width="8" height="2.5" fill="#d4d9ec"/><path d="M737 503.5 H741.3 V512.5 L739.2 515.5 L737 512.5Z" fill="#8c8c8c"/><path d="M741.3 507 H743 M741.3 509.5 H743" stroke="#8c8c8c" stroke-width="1"/><path d="M772.5 501.5 Q773 496.5 778.8 496.5 Q785.5 496.5 785.5 501.5 Q785.5 504.5 781.5 506.5 Q780 507.5 780 510" fill="none" stroke="#333" stroke-width="3"/><circle cx="779.5" cy="514" r="1.8" fill="#333"/><rect x="809.5" y="496.2" width="19" height="19.5" fill="#c9ccd6" stroke="#8a8a9a" stroke-width=".8"/><rect x="811.5" y="498.5" width="15" height="8.5" fill="#6aa0e8"/><path d="M818 506 Q821 499 826.5 498.5 Q824 505 818 506Z" fill="#30c030"/><rect x="809" y="506" width="10" height="10" fill="#d8bb98"/><rect x="810.5" y="503.5" width="5" height="5" fill="#fff" stroke="#999" stroke-width=".5"/><rect x="819.5" y="507.5" width="9" height="8.5" rx="1" fill="#e8e8ea" stroke="#999" stroke-width=".6"/><rect x="822.5" y="510" width="3" height="2" fill="#888"/><rect x="822.5" y="513" width="3" height="2" fill="#888"/></svg><svg style="left:1706px;top:508px" width="9" height="6"><path d="M0 0 H8 L4 5z" fill="#000"/></svg><div class="a" style="left:197px;top:522px;width:1523px;height:1px;background:#9c9c9c;"></div><div class="a" style="left:197px;top:523px;width:1523px;height:526px;background:#d4d9ec;"></div><div class="a" style="left:223px;top:523px;width:1497px;height:29px;background:#ffffff;"></div><div class="a" style="left:197px;top:527px;width:23px;height:143px;background:#f0f0f0;border:1px solid #c8c8c8;border-left:none"></div><div class="t" style="left:214px;top:540px;transform:rotate(90deg);transform-origin:0 0;font-family:'Liberation Mono';font-size:14px;letter-spacing:-0.4px;color:#111">Session Manager</div><div class="a" style="left:225px;top:525px;width:314px;height:24px;border:1px solid #8a8a8a;border-bottom:none;background:linear-gradient(#fafafa 0,#f2f2f2 30%,#dcdcdc 100%)"></div><div class="a" style="left:539px;top:525px;width:101px;height:27px;border:1px solid #8a8a8a;border-bottom:none;background:#fff"></div><svg style="left:231px;top:529px" width="19" height="15" viewBox="0 0 19 15"><path d="M1 8 L6.5 13.5 L18 2" fill="none" stroke="#12c012" stroke-width="4" stroke-linejoin="miter"/></svg><div class="t" style="left:253px;top:530.00px;font-family:'Liberation Sans';font-size:16px;color:#000;transform:scaleX(1.0311);transform-origin:0 0;">gns3@gns3vm: /opt/gns3/images/IOU</div><svg style="left:546px;top:529px" width="19" height="15" viewBox="0 0 19 15"><path d="M1 8 L6.5 13.5 L18 2" fill="none" stroke="#12c012" stroke-width="4" stroke-linejoin="miter"/></svg><div class="t" style="left:567px;top:530.00px;font-family:'Liberation Sans';font-size:16px;color:#000;font-weight:700;transform:scaleX(1.0176);transform-origin:0 0;">IOU1</div><svg style="left:617px;top:530px" width="17" height="17" viewBox="0 0 17 17"><rect x="0.5" y="0.5" width="16" height="16" rx="2" fill="#c0392b" stroke="#4a1a14"/><rect x="1.5" y="1.5" width="14" height="14" rx="1" fill="none" stroke="#e08070" stroke-width="0.8"/><path d="M5.5 5.5 L11.5 11.5 M11.5 5.5 L5.5 11.5" stroke="#fff" stroke-width="1.6"/></svg><svg style="left:1680px;top:530px" width="30" height="14"><path d="M7.5 1 V12 L1.5 6.5Z M22 1 V12 L28 6.5Z" fill="none" stroke="#000" stroke-width="1.2"/></svg><div class="a" style="left:225px;top:552px;width:1492px;height:467px;background:#dcdcdc;"></div><div class="a" style="left:225px;top:552px;width:1491px;height:1px;background:#505050;"></div><div class="a" style="left:225px;top:552px;width:1px;height:466px;background:#505050;"></div><div class="a" style="left:226px;top:553px;width:1490px;height:1px;background:#a8a8a8;"></div><div class="a" style="left:226px;top:553px;width:1px;height:465px;background:#a8a8a8;"></div><div class="a" style="left:227px;top:554px;width:1489px;height:464px;background:#ffffff;"></div><div class="a" style="left:1716px;top:552px;width:4px;height:470px;background:#f2f2f4;"></div><div class="a" style="left:1695px;top:554px;width:20px;height:464px;background:linear-gradient(90deg,#e8e8e8,#f0f0f0 50%,#eaeaea);"></div><svg style="left:1699px;top:559px" width="12" height="8"><path d="M1 7 L6 1 L11 7z" fill="#333"/></svg><div class="a" style="left:1695px;top:866px;width:19px;height:130px;border:1px solid #8e8e8e;border-radius:2px;background:linear-gradient(90deg,#f4f4f4 0,#e6e6e6 40%,#d2d2d2 100%)"></div><div class="a" style="left:1700px;top:925px;width:9px;height:1px;background:#333;"></div><div class="a" style="left:1700px;top:928px;width:9px;height:1px;background:#333;"></div><div class="a" style="left:1700px;top:931px;width:9px;height:1px;background:#333;"></div><svg style="left:1699px;top:1002px" width="12" height="8"><path d="M1 1 H11 L6 7z" fill="#333"/></svg><div class="a" style="left:227px;top:1018px;width:1490px;height:4px;background:#f4f4f6;"></div><div class="a" style="left:197px;top:1022px;width:1523px;height:1px;background:#6c6c6c;"></div><div class="a" style="left:197px;top:1023px;width:1523px;height:26px;background:#efecea;"></div><div class="t" style="left:202px;top:1030.00px;font-family:'Liberation Sans';font-size:16px;color:#000;transform:scaleX(0.9514);transform-origin:0 0;">Ready</div><div class="a" style="left:1230px;top:1026px;width:1px;height:21px;background:#c4c2c0;"></div><div class="a" style="left:1298px;top:1026px;width:1px;height:21px;background:#c4c2c0;"></div><div class="a" style="left:1444px;top:1026px;width:1px;height:21px;background:#c4c2c0;"></div><div class="a" style="left:1517px;top:1026px;width:1px;height:21px;background:#c4c2c0;"></div><div class="a" style="left:1617px;top:1026px;width:1px;height:21px;background:#c4c2c0;"></div><div class="a" style="left:1653px;top:1026px;width:1px;height:21px;background:#c4c2c0;"></div><div class="a" style="left:1697px;top:1026px;width:1px;height:21px;background:#c4c2c0;"></div><div class="a" style="left:1714px;top:1037px;width:2px;height:2px;background:#a0a0a0;"></div><div class="a" style="left:1711px;top:1040px;width:2px;height:2px;background:#a0a0a0;"></div><div class="a" style="left:1714px;top:1040px;width:2px;height:2px;background:#a0a0a0;"></div><div class="a" style="left:1708px;top:1043px;width:2px;height:2px;background:#a0a0a0;"></div><div class="a" style="left:1711px;top:1043px;width:2px;height:2px;background:#a0a0a0;"></div><div class="a" style="left:1714px;top:1043px;width:2px;height:2px;background:#a0a0a0;"></div><div class="t" style="left:1065px;top:1030.00px;font-family:'Liberation Sans';font-size:16px;color:#000;transform:scaleX(1.0073);transform-origin:0 0;">Telnet: 192.168.80.128</div><div class="t" style="left:1239px;top:1030.00px;font-family:'Liberation Sans';font-size:16px;color:#000;transform:scaleX(0.9808);transform-origin:0 0;">29,  12</div><div class="t" style="left:1303px;top:1030.00px;font-family:'Liberation Sans';font-size:16px;color:#000;transform:scaleX(0.9755);transform-origin:0 0;">29 Rows, 146 Cols</div><div class="t" style="left:1449px;top:1030.00px;font-family:'Liberation Sans';font-size:16px;color:#000;transform:scaleX(1.0546);transform-origin:0 0;">Xterm</div><div class="t" style="left:1622px;top:1030.00px;font-family:'Liberation Sans';font-size:16px;color:#707070;transform:scaleX(0.9117);transform-origin:0 0;">CAP</div><div class="t" style="left:1658px;top:1030.00px;font-family:'Liberation Sans';font-size:16px;color:#000;transform:scaleX(1.0154);transform-origin:0 0;">NUM</div><pre class="a" style="left:230px;top:555px;font-family:'Liberation Mono';font-size:16.6667px;line-height:16px;color:#000;margin:0;-webkit-text-stroke:0.15px #fff">*Mar 27 12:51:26.890: %LINK-3-UPDOWN: Interface Serial3/1, changed state to up
*Mar 27 12:51:26.890: %LINK-3-UPDOWN: Interface Serial3/2, changed state to up
*Mar 27 12:51:26.891: %LINK-3-UPDOWN: Interface Serial3/3, changed state to up
*Mar 27 12:51:26.905: %SYS-5-CONFIG_I: Configured from memory by console
*Mar 27 12:51:27.694: %LINEPROTO-5-UPDOWN: Line protocol on Interface Ethernet0/0, changed state to down
*Mar 27 12:51:27.694: %LINEPROTO-5-UPDOWN: Line protocol on Interface Ethernet0/1, changed state to down
*Mar 27 12:51:27.895: %LINEPROTO-5-UPDOWN: Line protocol on Interface Ethernet0/2, changed state to down
*Mar 27 12:51:27.895: %LINEPROTO-5-UPDOWN: Line protocol on Interface Ethernet0/3, changed state to down
*Mar 27 12:51:27.895: %LINEPROTO-5-UPDOWN: Line protocol on Interface Ethernet1/0, changed state to down
*Mar 27 12:51:27.895: %LINEPROTO-5-UPDOWN: Line protocol on Interface Ethernet1/1, changed state to down
*Mar 27 12:51:27.895: %LINEPROTO-5-UPDOWN: Line protocol on Interface Ethernet1/2, changed state to down
*Mar 27 12:51:27.895: %LINEPROTO-5-UPDOWN: Line protocol on Interface Ethernet1/3, changed state to down
*Mar 27 12:51:27.895: %LINEPROTO-5-UPDOWN: Line protocol on Interface Serial2/0, changed state to down
*Mar 27 12:51:27.895: %LINEPROTO-5-UPDOWN: Line protocol on Interface Serial2/1, changed state to down
*Mar 27 12:51:28.805: %LINK-5-CHANGED: Interface Ethernet0/0, changed state to administratively down
*Mar 27 12:51:28.815: %LINK-5-CHANGED: Interface Ethernet0/1, changed state to administratively down
*Mar 27 12:51:28.895: %LINK-5-CHANGED: Interface Serial2/2, changed state to administratively down
*Mar 27 12:51:28.895: %LINK-5-CHANGED: Interface Serial2/3, changed state to administratively down
*Mar 27 12:51:28.905: %LINK-5-CHANGED: Interface Serial3/0, changed state to administratively down
*Mar 27 12:51:28.905: %LINK-5-CHANGED: Interface Serial3/1, changed state to administratively down
*Mar 27 12:51:28.905: %LINK-5-CHANGED: Interface Serial3/2, changed state to administratively down
*Mar 27 12:51:28.905: %LINK-5-CHANGED: Interface Serial3/3, changed state to administratively down
IOU1#
IOU1#conf
Configuring from terminal, memory, or network [terminal]?
Enter configuration commands, one per line.  End with CNTL/Z.
IOU1(config)#hos
IOU1(config)#hostname R1
R1(config)#</pre><div class="a" style="left:340px;top:1002px;width:10px;height:16px;background:#000;"></div>
</body></html>
